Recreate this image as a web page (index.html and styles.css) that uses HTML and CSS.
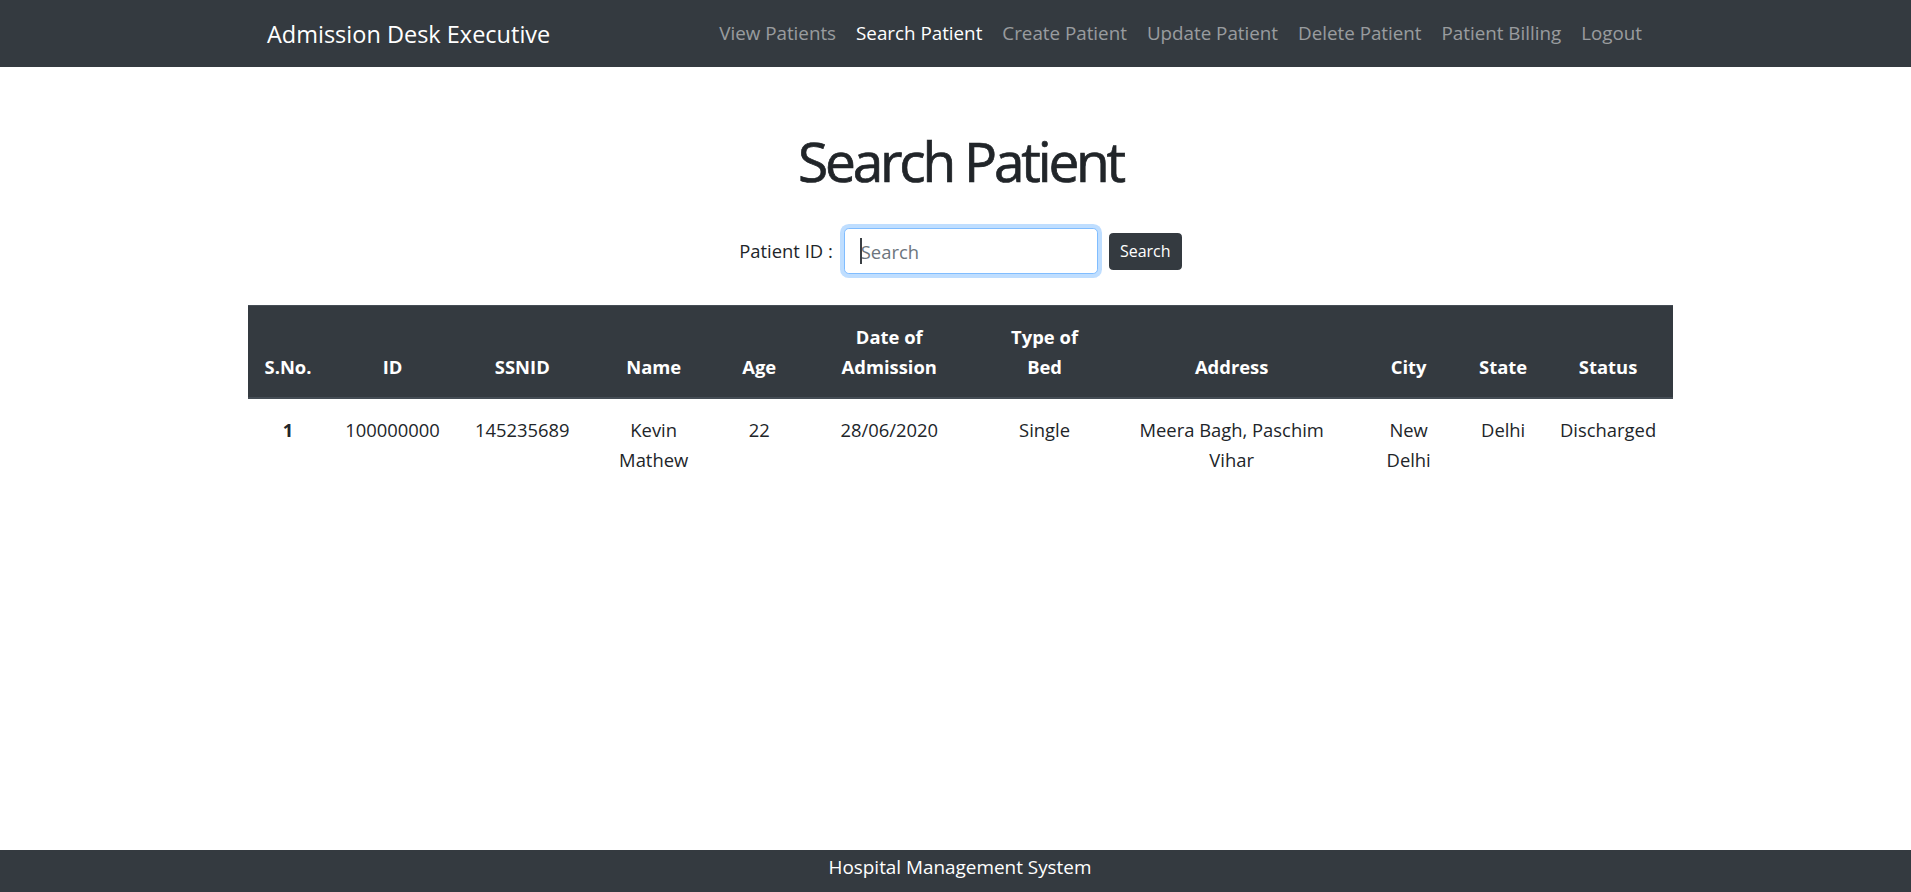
FILE: index.html
```html
<!DOCTYPE html>
<html lang="en">
<head>
<meta charset="utf-8">
<title>Search Patient</title>
<link rel="stylesheet" href="styles.css">
</head>
<body>
<nav class="navbar">
  <div class="wrap nav-inner">
    <a class="brand" href="#">Admission Desk Executive</a>
    <ul class="nav-links">
      <li><a class="nav-link" href="#">View Patients</a></li>
      <li><a class="nav-link active" href="#">Search Patient</a></li>
      <li><a class="nav-link" href="#">Create Patient</a></li>
      <li><a class="nav-link" href="#">Update Patient</a></li>
      <li><a class="nav-link" href="#">Delete Patient</a></li>
      <li><a class="nav-link" href="#">Patient Billing</a></li>
      <li><a class="nav-link" href="#">Logout</a></li>
    </ul>
  </div>
</nav>

<main class="main">
  <div class="wrap">
    <h1 class="title">Search Patient</h1>
    <form class="search-form">
      <label class="search-label" for="pid">Patient ID :</label>
      <span class="input-wrap"><input class="search-input" id="pid" type="text" placeholder="Search"></span>
      <button class="btn-search" type="button">Search</button>
    </form>

    <table class="patients">
      <colgroup>
        <col class="c-sno"><col class="c-id"><col class="c-ssn"><col class="c-name"><col class="c-age"><col class="c-date"><col class="c-bed"><col class="c-addr"><col class="c-city"><col class="c-state"><col class="c-status">
      </colgroup>
      <thead>
        <tr>
          <th>S.No.</th>
          <th>ID</th>
          <th>SSNID</th>
          <th>Name</th>
          <th>Age</th>
          <th>Date of Admission</th>
          <th>Type of Bed</th>
          <th>Address</th>
          <th>City</th>
          <th>State</th>
          <th>Status</th>
        </tr>
      </thead>
      <tbody>
        <tr>
          <th class="row-head">1</th>
          <td>100000000</td>
          <td>145235689</td>
          <td>Kevin Mathew</td>
          <td>22</td>
          <td>28/06/2020</td>
          <td>Single</td>
          <td>Meera Bagh, Paschim Vihar</td>
          <td>New Delhi</td>
          <td>Delhi</td>
          <td>Discharged</td>
        </tr>
      </tbody>
    </table>
  </div>
</main>

<footer class="footer">Hospital Management System</footer>
</body>
</html>
```

FILE: styles.css
```css
* { box-sizing: border-box; }

html, body { height: 100%; }

body {
  margin: 0;
  min-height: 100vh;
  display: flex;
  flex-direction: column;
  font-family: "Open Sans", "Noto Sans", sans-serif;
  font-size: 18.4px;
  line-height: 28.8px;
  color: #212529;
  background: #fff;
}

.wrap {
  max-width: 1435px;
  margin: 0 auto;
  padding-left: 10px;
  width: 100%;
}

/* Navbar */
.navbar {
  background: #343a40;
  height: 67px;
  flex: 0 0 auto;
}
.nav-inner {
  height: 67px;
  display: flex;
  align-items: center;
  justify-content: space-between;
}
.nav-inner .brand { margin-left: 19px; }
.nav-links { margin-right: 21px; }

.brand {
  color: #fff;
  text-decoration: none;
  font-size: 23.5px;
  line-height: 36px;
}
.nav-links {
  list-style: none;
  margin-top: 0;
  margin-bottom: 0;
  padding: 0;
  display: flex;
}
.nav-link {
  display: block;
  padding: 0 10px;
  color: rgba(255, 255, 255, 0.5);
  text-decoration: none;
  font-size: 18.8px;
  line-height: 28.8px;
}
.nav-link.active { color: #fff; }

/* Main */
.main { flex: 1 0 auto; }

.title {
  margin: 62px 0 0;
  text-align: center;
  font-size: 55px;
  line-height: 64px;
  font-weight: 400;
  letter-spacing: -3.2px;
  color: #212529;
  -webkit-text-stroke: 0.7px #212529;
}

.search-form {
  margin-top: 35px;
  display: flex;
  justify-content: center;
  align-items: center;
  height: 46px;
}
.search-label {
  margin-right: 11px;
  font-size: 18.4px;
  color: #212529;
}
.input-wrap {
  position: relative;
  display: block;
}
.input-wrap::after {
  content: "";
  position: absolute;
  left: 16px;
  top: 10px;
  width: 2px;
  height: 26px;
  background: #3a3f44;
}
.search-input {
  display: block;
  width: 254px;
  height: 46px;
  padding: 0 14.4px 0 16px;
  font-family: "Open Sans", "Noto Sans", sans-serif;
  font-size: 18.4px;
  color: #495057;
  border: 1px solid #80bdff;
  border-radius: 4.8px;
  box-shadow: 0 0 0 4px rgba(0, 123, 255, 0.25);
  outline: none;
  background: #fff;
}
.search-input::placeholder { color: #6c757d; opacity: 1; }

.btn-search {
  margin-left: 11px;
  height: 37px;
  width: 73px;
  padding: 0;
  font-family: "Open Sans", "Noto Sans", sans-serif;
  font-size: 16px;
  line-height: 25px;
  color: #fff;
  background: #343a40;
  border: 1px solid #343a40;
  border-radius: 3.8px;
}

/* Table */
.patients {
  margin-top: 31px;
  width: 1425px;
  table-layout: fixed;
  border-collapse: collapse;
  text-align: center;
}
.c-sno { width: 80px; }
.c-id { width: 129px; }
.c-ssn { width: 130.6px; }
.c-name { width: 132.2px; }
.c-age { width: 78.8px; }
.c-date { width: 181.4px; }
.c-bed { width: 129.2px; }
.c-addr { width: 245px; }
.c-city { width: 109px; }
.c-state { width: 80px; }
.c-status { width: 129.8px; }

.patients thead th {
  background: #343a40;
  color: #fff;
  font-weight: 700;
  vertical-align: bottom;
  padding: 16px 14.4px 15.4px;
  line-height: 29.8px;
  border-top: 1px solid #454d55;
  border-bottom: 2.4px solid #454d55;
}
.patients td,
.patients .row-head {
  padding: 16.4px 14.4px 14.4px;
  line-height: 29.4px;
  vertical-align: top;
}
.patients .row-head { font-weight: 700; }

/* Footer */
.footer {
  flex: 0 0 auto;
  height: 42px;
  background: #343a40;
  color: #fff;
  text-align: center;
  padding: 2.5px 0 0 9px;
  font-size: 18.9px;
  line-height: 28.8px;
}
```
